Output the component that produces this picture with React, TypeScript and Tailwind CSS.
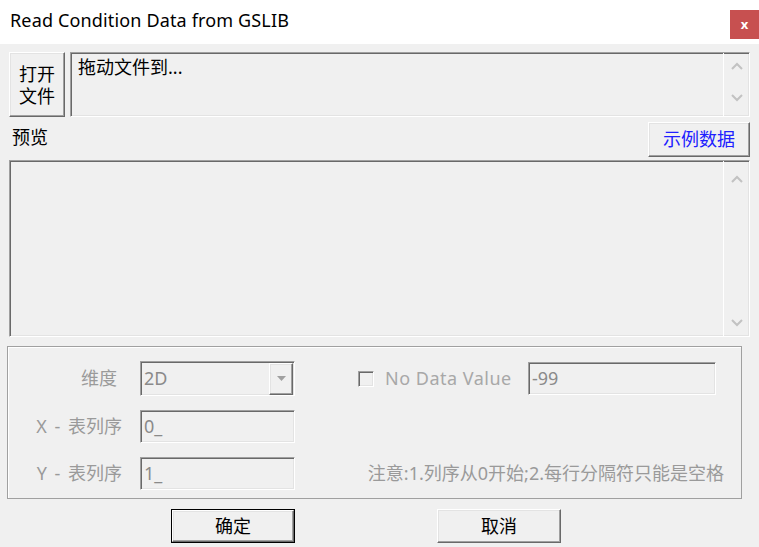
import React from 'react';

const FONT = 'font-["Noto_Sans","Noto_Sans_CJK_SC",sans-serif]';

// classic 3D borders
const sunken =
  'border border-t-[#a0a0a0] border-l-[#a0a0a0] border-b-white border-r-white shadow-[inset_1px_1px_0_#696969,inset_-1px_-1px_0_#e3e3e3]';
const raised =
  'border border-t-white border-l-white border-b-[#696969] border-r-[#696969] shadow-[inset_-1px_-1px_0_#a0a0a0,inset_1px_1px_0_#e3e3e3] bg-[#f0f0f0]';

const Chevron = ({ up }: { up?: boolean }) => (
  <svg width="12" height="8" viewBox="0 0 12 8">
    <path
      d={up ? 'M1 7 L6 2 L11 7' : 'M1 1 L6 6 L11 1'}
      fill="none"
      stroke="#c2c2c2"
      strokeWidth="2"
    />
  </svg>
);

const ScrollArea = ({
  text,
  className,
  upAt,
  downAt,
}: {
  text?: string;
  className: string;
  upAt: string;
  downAt: string;
}) => (
  <div className={`flex ${sunken} ${className}`}>
    <div className="flex-1 pl-[7px] pt-[3px] text-[18px] leading-[22px] text-black">
      {text}
    </div>
    <div className="flex w-[26px] flex-col items-center border-l border-white">
      <div className={upAt}>
        <Chevron up />
      </div>
      <div className={downAt}>
        <Chevron />
      </div>
    </div>
  </div>
);

const Field = ({ value, className }: { value: string; className: string }) => (
  <div
    className={`flex items-center pl-[3px] text-[18px] text-[#8a8a8a] ${sunken} ${className}`}
  >
    {value}
  </div>
);

export default function App() {
  return (
    <div className={`h-[547px] w-[759px] overflow-hidden bg-[#f0f0f0] ${FONT}`}>
      {/* title bar */}
      <div className="flex h-[44px] items-start justify-between bg-white">
        <div className="pl-[10px] pt-[8px] text-[18px] leading-[24px] tracking-[0.15px] text-black">
          Read Condition Data from GSLIB
        </div>
        <div className="mt-[10px] flex h-[29px] w-[29px] items-center justify-center bg-[#c75050] text-[13px] font-bold leading-none text-white">
          x
        </div>
      </div>

      <div className="px-[9px]">
        {/* open file row */}
        <div className="mt-[8px] flex gap-[5px]">
          <div
            className={`flex h-[65px] w-[56px] items-center justify-center text-center text-[18px] leading-[22px] text-black ${raised}`}
          >
            打开
            <br />
            文件
          </div>
          <ScrollArea
            text="拖动文件到..."
            className="h-[65px] flex-1"
            upAt="mt-[9px]"
            downAt="mt-[24px]"
          />
        </div>

        {/* preview header */}
        <div className="mt-[5px] flex h-[35px] items-start justify-between">
          <div className="pl-[3px] pt-[3px] text-[18px] leading-[24px] text-black">预览</div>
          <div
            className={`flex h-[35px] w-[102px] items-center justify-center text-[18px] text-[#2020ff] ${raised}`}
          >
            示例数据
          </div>
        </div>

        <ScrollArea className="mt-[3px] h-[177px]" upAt="mt-[14px]" downAt="mt-[136px]" />
      </div>

      {/* settings group */}
      <div className="ml-[7px] mt-[9px] h-[153px] w-[735px] border border-[#a0a0a0] shadow-[inset_1px_1px_0_white] pt-[14px] text-[18px] text-[#9a9a9a]">
        <div className="flex items-center">
          <div className="w-[132px] pr-[23px] text-right">维度</div>
          <div className={`flex h-[35px] w-[155px] items-center ${sunken}`}>
            <div className="flex-1 pl-[3px] text-[#8a8a8a]">2D</div>
            <div
              className={`mr-[1px] flex h-[32px] w-[24px] items-center justify-center ${raised}`}
            >
              <svg width="9" height="5" viewBox="0 0 9 5">
                <path d="M0 0 H9 L4.5 5 Z" fill="#a0a0a0" />
              </svg>
            </div>
          </div>
          <div className="ml-[63px] h-[16px] w-[16px] border border-t-[#a0a0a0] border-l-[#a0a0a0] border-b-white border-r-white bg-[#f0f0f0] shadow-[inset_1px_1px_0_#696969,inset_-1px_-1px_0_#e3e3e3]" />
          <div className="ml-[11px] w-[143px] tracking-[0.5px] text-[#a8a8a8]">No Data Value</div>
          <Field value="-99" className="h-[33px] w-[188px]" />
        </div>

        <div className="mt-[14px] flex items-center">
          <div className="w-[132px] pr-[18px] text-right [word-spacing:3px]">X - 表列序</div>
          <Field value="0_" className="h-[33px] w-[155px]" />
        </div>

        <div className="mt-[14px] flex items-center">
          <div className="w-[132px] pr-[18px] text-right [word-spacing:3px]">Y - 表列序</div>
          <Field value="1_" className="h-[33px] w-[155px]" />
          <div className="ml-auto pr-[17px] text-[#9a9a9a]">
            注意:1.列序从0开始;2.每行分隔符只能是空格
          </div>
        </div>
      </div>

      {/* dialog buttons */}
      <div className="mt-[10px] flex">
        <div className="ml-[171px] h-[34px] w-[124px] border border-black">
          <div
            className={`flex h-full w-full items-center justify-center text-[18px] text-black ${raised}`}
          >
            确定
          </div>
        </div>
        <div
          className={`ml-[142px] flex h-[34px] w-[124px] items-center justify-center text-[18px] text-black ${raised}`}
        >
          取消
        </div>
      </div>
    </div>
  );
}
